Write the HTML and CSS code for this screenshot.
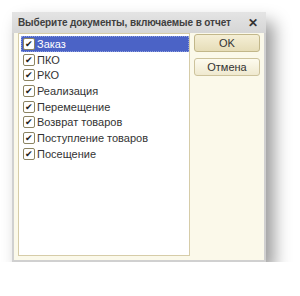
FILE: index.html
```html
<!DOCTYPE html>
<html lang="ru">
<head>
    <meta charset="UTF-8">
    <title>Выберите документы</title>
    <link rel="stylesheet" href="styles.css">
</head>
<body>
    <div class="window">
        <div class="titlebar">
            <span class="title">Выберите документы, включаемые в отчет</span>
            <span class="close">&#x2715;</span>
        </div>
        <div class="content">
            <div class="list">
                <div class="row selected"><span class="check">&#x2714;</span>Заказ</div>
                <div class="row"><span class="check">&#x2714;</span>ПКО</div>
                <div class="row"><span class="check">&#x2714;</span>РКО</div>
                <div class="row"><span class="check">&#x2714;</span>Реализация</div>
                <div class="row"><span class="check">&#x2714;</span>Перемещение</div>
                <div class="row"><span class="check">&#x2714;</span>Возврат товаров</div>
                <div class="row"><span class="check">&#x2714;</span>Поступление товаров</div>
                <div class="row"><span class="check">&#x2714;</span>Посещение</div>
            </div>
            <div class="buttons">
                <button class="btn default">OK</button>
                <button class="btn">Отмена</button>
            </div>
        </div>
    </div>
</body>
</html>
```

FILE: styles.css
```css
body {
    margin: 0;
    background: #ffffff;
    font-family: "Liberation Sans", Arial, sans-serif;
}
.window {
    margin: 12px 0 0 12px;
    width: 254px;
    height: 250px;
    box-sizing: border-box;
    border: 2px solid #d0d0d0;
    border-top: none;
    background: #fbf9ea;
    box-shadow: 8px 10px 16px rgba(0,0,0,0.4);
    display: flex;
    flex-direction: column;
}
.titlebar {
    height: 21px;
    margin: 0 -2px;
    background: linear-gradient(#e4e4e4, #d6d6d6);
    display: flex;
    align-items: center;
    justify-content: space-between;
    padding: 0 8px 0 6px;
}
.title {
    font-size: 10px;
    font-weight: bold;
    color: #404040;
    white-space: nowrap;
    letter-spacing: -0.1px;
}
.close {
    font-size: 12px;
    font-weight: bold;
    color: #333;
}
.content {
    flex: 1;
    display: flex;
    padding: 0 4px 4px 4px;
    gap: 4px;
}
.list {
    width: 172px;
    box-sizing: border-box;
    border: 1px solid #d6cca8;
    background: #ffffff;
    padding: 2px 0 0 2px;
}
.row {
    height: 15.7px;
    display: flex;
    align-items: center;
    font-size: 11px;
    color: #333;
    padding-left: 2px;
}
.row.selected {
    background: #4b63c6;
    color: #ffffff;
    outline: 1px dotted #8fa0e0;
    outline-offset: -1px;
}
.check {
    width: 10px;
    height: 10px;
    border: 1px solid #8c8462;
    border-radius: 2px;
    background: #ffffff;
    color: #222;
    font-size: 9px;
    line-height: 10px;
    text-align: center;
    margin-right: 2px;
}
.buttons {
    display: flex;
    flex-direction: column;
    gap: 6px;
    padding-top: 1px;
}
.btn {
    width: 66px;
    height: 18px;
    border: 1px solid #cdc39c;
    border-radius: 3px;
    background: linear-gradient(#fdfbef, #efe9cf);
    font-family: "Liberation Sans", Arial, sans-serif;
    font-size: 11px;
    color: #333;
    padding: 0;
}
.btn.default {
    border-color: #c2b78a;
    background: linear-gradient(#f5efd6, #e6ddb8);
}
```
